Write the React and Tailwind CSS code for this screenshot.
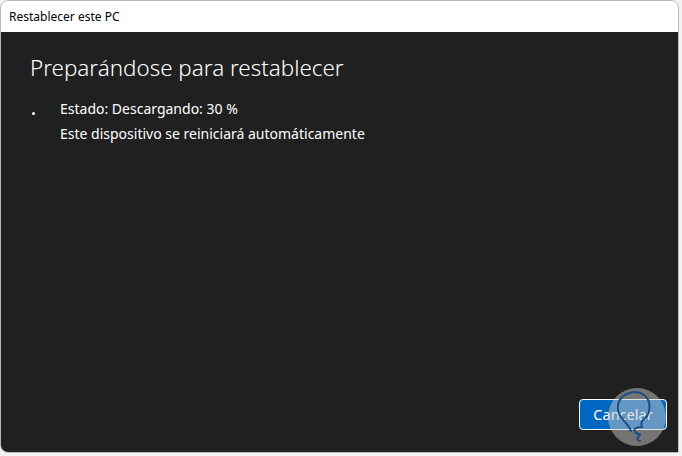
import React from "react";

export default function App() {
  const font = { fontFamily: '"Segoe UI", "Noto Sans", "Open Sans", sans-serif' };
  return (
    <div className="w-[682px] h-[456px] bg-[#f3f3f3] overflow-hidden relative" style={font}>
      <div className="w-[679px] h-[453px] flex flex-col rounded-t-[8px] rounded-bl-[8px] border border-[#b9b9b9] overflow-hidden">
        <div className="h-[31px] bg-white flex items-center pl-[8px] text-[12px] text-black">
          Restablecer este PC
        </div>
        <div className="flex-1 bg-[#202020] flex flex-col relative">
          <div className="pl-[29px] pt-[21px] text-[22.4px] font-light text-white leading-[30px]">
            Preparándose para restablecer
          </div>
          <div className="flex pl-[31px] pt-[16px]">
            <div className="w-[28px] pt-[13px]">
              <div className="w-[3px] h-[3px] bg-white rounded-full"></div>
            </div>
            <div className="flex flex-col gap-[6px] text-[14px] text-white leading-[19px]">
              <div>Estado: Descargando: 30 %</div>
              <div>Este dispositivo se reiniciará automáticamente</div>
            </div>
          </div>
          <div className="flex-1"></div>
          <div className="flex justify-end pr-[11px] pb-[22px]">
            <button className="w-[88px] h-[31px] bg-[#0067c0] text-white text-[14.5px] rounded-[4px] border border-white">
              Cancelar
            </button>
          </div>
          <svg className="absolute left-[606px] top-[355px]" width="60" height="62" viewBox="0 0 60 62">
            <circle cx="30" cy="30" r="29" fill="rgba(200,200,200,0.5)" />
            <path d="M24 44 C20 34 9 30 11 18 C13 6 29 2 37 8 C45 14 43 26 39 30 C35 34 33 36 35 40 C29 40 25 42 29 46 C33 48 35 46 31 50 C29 52 31 54 33 54"
              fill="none" stroke="#1a4f8a" strokeWidth="2" strokeLinecap="round" />
          </svg>
        </div>
      </div>
    </div>
  );
}
